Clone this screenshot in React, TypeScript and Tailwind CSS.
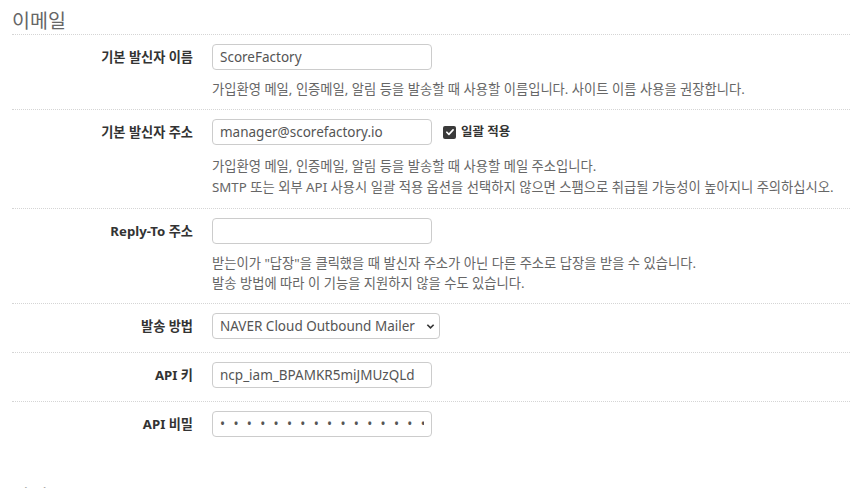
import { useState } from "react";

const inputCls =
  "w-[220px] h-[26px] px-[7px] border border-[#ccc] rounded-[4px] text-[13.5px] text-[#555] bg-white focus:outline-none";

const labelCls = "w-[181px] shrink-0 text-right text-[13.2px] leading-[26px] font-bold text-[#333]";

const Row = ({ label, children, pb = "pb-[13px]" }: { label: string; children: React.ReactNode; pb?: string }) => (
  <div className={`flex border-b border-dotted border-[#d5d5d5] pt-[9px] ${pb}`}>
    <div className={labelCls}>{label}</div>
    <div className="ml-[19px] flex-1">{children}</div>
  </div>
);

const Help = ({ lines, cls = "mt-[9px] leading-[20px]" }: { lines: string[]; cls?: string }) => (
  <div className={`${cls} text-[13.3px] text-[#666] whitespace-nowrap`}>
    {lines.map((l) => (
      <p key={l}>{l}</p>
    ))}
  </div>
);

const App = () => {
  const [name, setName] = useState("ScoreFactory");
  const [addr, setAddr] = useState("manager@scorefactory.io");
  const [replyTo, setReplyTo] = useState("");
  const [bulk, setBulk] = useState(true);
  const [apiKey, setApiKey] = useState("ncp_iam_BPAMKR5miJMUzQLd");
  const [secret, setSecret] = useState("abcdefghijklmnop");

  return (
    <div className="min-h-screen bg-white pl-3 pt-[8px] font-['Noto_Sans','Noto_Sans_CJK_KR',sans-serif]">
      <h2 className="text-[19.5px] leading-[26px] text-[#666] border-b border-dotted border-[#d5d5d5]">
        이메일
      </h2>

      <Row label="기본 발신자 이름" pb="pb-[10px]">
        <input className={inputCls} value={name} onChange={(e) => setName(e.target.value)} />
        <Help lines={["가입환영 메일, 인증메일, 알림 등을 발송할 때 사용할 이름입니다. 사이트 이름 사용을 권장합니다."]} />
      </Row>

      <Row label="기본 발신자 주소" pb="pb-[10px]">
        <div className="flex items-center">
          <input className={inputCls} value={addr} onChange={(e) => setAddr(e.target.value)} />
          <label className="ml-[11px] flex items-center gap-[5px] cursor-pointer text-[12.5px] font-bold text-[#333]">
            <span
              onClick={() => setBulk(!bulk)}
              className={`w-[13px] h-[13px] rounded-[2px] flex items-center justify-center ${bulk ? "bg-[#3a3a3a]" : "border border-[#777] bg-white"}`}
            >
              {bulk && (
                <svg viewBox="0 0 12 12" className="w-[10px] h-[10px]">
                  <path d="M2.2 6.3l2.5 2.5 5-5.3" fill="none" stroke="white" strokeWidth="2" strokeLinecap="round" strokeLinejoin="round" />
                </svg>
              )}
            </span>
            일괄 적용
          </label>
        </div>
        <Help
          cls="mt-[11px] leading-[21px]"
          lines={[
            "가입환영 메일, 인증메일, 알림 등을 발송할 때 사용할 메일 주소입니다.",
            "SMTP 또는 외부 API 사용시 일괄 적용 옵션을 선택하지 않으면 스팸으로 취급될 가능성이 높아지니 주의하십시오.",
          ]}
        />
      </Row>

      <Row label="Reply-To 주소" pb="pb-[10px]">
        <input className={inputCls} value={replyTo} onChange={(e) => setReplyTo(e.target.value)} />
        <Help
          lines={[
            '받는이가 "답장"을 클릭했을 때 발신자 주소가 아닌 다른 주소로 답장을 받을 수 있습니다.',
            "발송 방법에 따라 이 기능을 지원하지 않을 수도 있습니다.",
          ]}
        />
      </Row>

      <Row label="발송 방법">
        <div className="relative w-[228px]">
          <select className="w-[228px] h-[26px] pl-[7px] pr-[16px] border border-[#ccc] rounded-[4px] text-[13.5px] text-[#555] bg-white appearance-none focus:outline-none">
            <option>NAVER Cloud Outbound Mailer</option>
            <option>SMTP</option>
          </select>
          <svg viewBox="0 0 10 10" className="absolute right-[5px] top-[9px] w-[9px] h-[9px] pointer-events-none">
            <path d="M1.5 3l3.5 3.5L8.5 3" fill="none" stroke="#333" strokeWidth="1.8" />
          </svg>
        </div>
      </Row>

      <Row label="API 키">
        <input className={inputCls} value={apiKey} onChange={(e) => setApiKey(e.target.value)} />
      </Row>

      <div className="flex pt-[9px] pb-[13px]">
        <div className={labelCls}>API 비밀</div>
        <div className="ml-[19px]">
          <input
            type="password"
            className={`${inputCls} tracking-[8.3px] text-[10px] text-[#444]`}
            value={secret}
            onChange={(e) => setSecret(e.target.value)}
          />
        </div>
      </div>

      <h2 className="mt-[34px] text-[19.5px] leading-[26px] text-[#666]">알림</h2>
    </div>
  );
};

export default App;
